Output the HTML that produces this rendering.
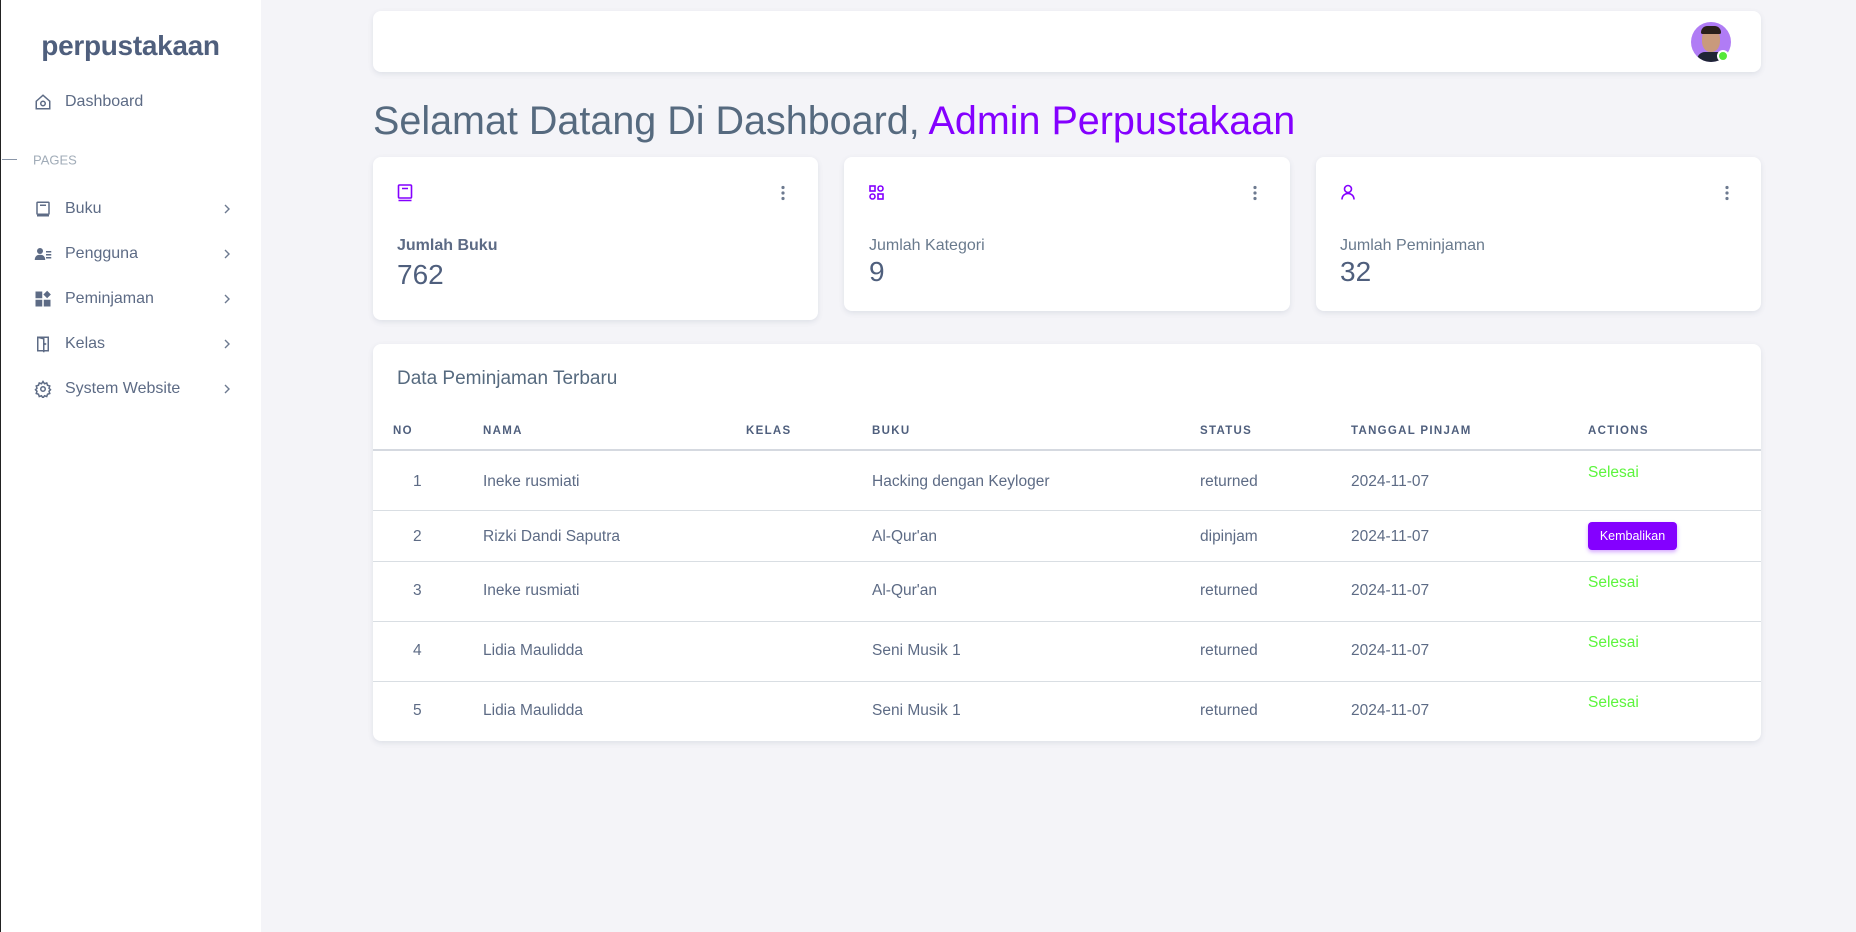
<!DOCTYPE html>
<html><head><meta charset="utf-8"><style>
*{box-sizing:border-box;margin:0;padding:0}
body{width:1856px;height:932px;background:#f4f4f8;font-family:"Liberation Sans",sans-serif;color:#566a7f;position:relative;overflow:hidden}
.abs{position:absolute}
.side{left:0;top:0;width:261px;height:932px;background:#fff;border-left:1.5px solid #222}
.logo{left:0;width:261px;top:30px;text-align:center;font-size:28px;font-weight:bold;color:#4f5f7d;letter-spacing:-0.3px}
.nav{left:65px;font-size:16px;color:#5d6b85;transform:translateY(-50%)}
.ic{left:34px;transform:translateY(-50%)}
.chev{left:222px;transform:translateY(-50%)}
.card{background:#fff;border-radius:8px;box-shadow:0 2px 6px rgba(67,89,113,.12)}
.lbl{font-size:16px;color:#697a8d}
.val{font-size:28px;color:#4f5f7d}
.th{top:425px;font-size:11.5px;font-weight:bold;letter-spacing:1.3px;color:#4f5f7d}
.td{font-size:15.5px;color:#5d6b85;transform:translateY(-50%)}
.line{left:373px;width:1388px;height:1px;background:#d9dee3}
.sel{left:1588px;font-size:15.5px;color:#5cf53d}
</style></head><body>
<div class="abs side"></div>
<div class="abs logo">perpustakaan</div>
<svg class="abs ic" style="top:102px" width="18" height="18" viewBox="0 0 24 24" fill="none" stroke="#5d6b85" stroke-width="2"><path d="M3 11l9-8 9 8v10H3z"/><circle cx="12" cy="14" r="3"/></svg>
<div class="abs nav" style="top:102px">Dashboard</div>
<div class="abs" style="left:2px;top:159px;width:15px;height:1px;background:#8a96a8"></div>
<div class="abs nav" style="left:33px;top:160px;font-size:13px;color:#a1acb8">PAGES</div>

<svg class="abs ic" style="top:209px" width="18" height="18" viewBox="0 0 24 24" fill="none" stroke="#5d6b85" stroke-width="2"><rect x="4" y="3" width="16" height="16" rx="1"/><path d="M4 21h16M8 7h8"/></svg>
<div class="abs nav" style="top:209px">Buku</div>
<svg class="abs ic" style="top:254px" width="18" height="18" viewBox="0 0 24 24" fill="#5d6b85"><circle cx="8" cy="8" r="4"/><path d="M1 20c0-5 3-7 7-7s7 2 7 7z"/><rect x="16" y="8" width="7" height="2"/><rect x="16" y="12" width="7" height="2"/><rect x="16" y="16" width="7" height="2"/></svg>
<div class="abs nav" style="top:254px">Pengguna</div>
<svg class="abs ic" style="top:299px" width="18" height="18" viewBox="0 0 24 24" fill="#5d6b85"><rect x="2" y="2" width="9" height="9"/><rect x="2" y="13" width="9" height="9"/><rect x="13" y="13" width="9" height="9"/><path d="M17.5 1l5 5-5 5-5-5z"/></svg>
<div class="abs nav" style="top:299px">Peminjaman</div>
<svg class="abs ic" style="top:344px" width="18" height="18" viewBox="0 0 24 24" fill="none" stroke="#5d6b85" stroke-width="2"><path d="M5 3h14v18H5zM5 3l8 2v18"/><circle cx="15" cy="12" r=".5"/></svg>
<div class="abs nav" style="top:344px">Kelas</div>
<svg class="abs ic" style="top:389px" width="18" height="18" viewBox="0 0 24 24" fill="none" stroke="#5d6b85" stroke-width="2"><circle cx="12" cy="12" r="3"/><path d="M12 2l2 3 3-1 1 3 3 1-1 3 2 2-2 2 1 3-3 1-1 3-3-1-2 3-2-3-3 1-1-3-3-1 1-3-2-2 2-2-1-3 3-1 1-3 3 1z"/></svg>
<div class="abs nav" style="top:389px">System Website</div>
<svg class="abs chev" style="top:209px" width="10" height="12" viewBox="0 0 10 12" fill="none" stroke="#6d7a90" stroke-width="1.4"><path d="M3 2l4 4-4 4"/></svg>
<svg class="abs chev" style="top:254px" width="10" height="12" viewBox="0 0 10 12" fill="none" stroke="#6d7a90" stroke-width="1.4"><path d="M3 2l4 4-4 4"/></svg>
<svg class="abs chev" style="top:299px" width="10" height="12" viewBox="0 0 10 12" fill="none" stroke="#6d7a90" stroke-width="1.4"><path d="M3 2l4 4-4 4"/></svg>
<svg class="abs chev" style="top:344px" width="10" height="12" viewBox="0 0 10 12" fill="none" stroke="#6d7a90" stroke-width="1.4"><path d="M3 2l4 4-4 4"/></svg>
<svg class="abs chev" style="top:389px" width="10" height="12" viewBox="0 0 10 12" fill="none" stroke="#6d7a90" stroke-width="1.4"><path d="M3 2l4 4-4 4"/></svg>

<div class="abs card" style="left:373px;top:11px;width:1388px;height:61px"></div>
<div class="abs" style="left:1691px;top:22px;width:40px;height:40px;border-radius:50%;background:#b07cf5;overflow:hidden">
<div class="abs" style="left:11px;top:6px;width:18px;height:24px;border-radius:45%;background:#c99a7c"></div>
<div class="abs" style="left:10px;top:4px;width:20px;height:8px;border-radius:8px 8px 2px 2px;background:#2a1f1a"></div>
<div class="abs" style="left:6px;top:30px;width:28px;height:14px;border-radius:8px 8px 0 0;background:#1f2535"></div></div>
<div class="abs" style="left:1717px;top:50px;width:12px;height:12px;border-radius:50%;background:#56e83a;border:2px solid #fff"></div>

<div class="abs" style="left:373px;top:99px;font-size:39.5px;color:#566a7f;white-space:nowrap">Selamat Datang Di Dashboard, <span style="color:#8400ff">Admin Perpustakaan</span></div>

<div class="abs card" style="left:373px;top:157px;width:445px;height:163px"></div>
<div class="abs card" style="left:844px;top:157px;width:446px;height:154px"></div>
<div class="abs card" style="left:1316px;top:157px;width:445px;height:154px"></div>
<svg class="abs" style="left:397px;top:184px" width="16" height="18" viewBox="0 0 16 18" fill="none" stroke="#8400ff" stroke-width="1.6"><rect x="1.5" y="1" width="13" height="13" rx="1"/><path d="M1.5 16.5h13M5 4.5h6"/></svg>
<svg class="abs" style="left:869px;top:185px" width="15" height="15" viewBox="0 0 15 15" fill="none" stroke="#8400ff" stroke-width="1.6"><rect x="1" y="1" width="5" height="5"/><circle cx="11.5" cy="3.5" r="2.5"/><circle cx="3.5" cy="11.5" r="2.5"/><rect x="9" y="9" width="5" height="5"/></svg>
<svg class="abs" style="left:1340px;top:184px" width="16" height="16" viewBox="0 0 16 16" fill="none" stroke="#8400ff" stroke-width="1.6"><circle cx="8" cy="5" r="3.5"/><path d="M2 15.5c0-4 3-6 6-6s6 2 6 6"/></svg>
<svg class="abs" style="left:781px;top:185px" width="4" height="16"><circle cx="2" cy="2.5" r="1.6" fill="#6d7a90"/><circle cx="2" cy="8" r="1.6" fill="#6d7a90"/><circle cx="2" cy="13.5" r="1.6" fill="#6d7a90"/></svg>
<svg class="abs" style="left:1253px;top:185px" width="4" height="16"><circle cx="2" cy="2.5" r="1.6" fill="#6d7a90"/><circle cx="2" cy="8" r="1.6" fill="#6d7a90"/><circle cx="2" cy="13.5" r="1.6" fill="#6d7a90"/></svg>
<svg class="abs" style="left:1725px;top:185px" width="4" height="16"><circle cx="2" cy="2.5" r="1.6" fill="#6d7a90"/><circle cx="2" cy="8" r="1.6" fill="#6d7a90"/><circle cx="2" cy="13.5" r="1.6" fill="#6d7a90"/></svg>
<div class="abs lbl" style="left:397px;top:237px;font-weight:bold;color:#5d6b85">Jumlah Buku</div>
<div class="abs val" style="left:397px;top:259px">762</div>
<div class="abs lbl" style="left:869px;top:237px">Jumlah Kategori</div>
<div class="abs val" style="left:869px;top:256px">9</div>
<div class="abs lbl" style="left:1340px;top:237px">Jumlah Peminjaman</div>
<div class="abs val" style="left:1340px;top:256px">32</div>

<div class="abs card" style="left:373px;top:344px;width:1388px;height:397px"></div>
<div class="abs" style="left:397px;top:368px;font-size:19px;color:#566a7f">Data Peminjaman Terbaru</div>
<div class="abs th" style="left:393px">NO</div>
<div class="abs th" style="left:483px">NAMA</div>
<div class="abs th" style="left:746px">KELAS</div>
<div class="abs th" style="left:872px">BUKU</div>
<div class="abs th" style="left:1200px">STATUS</div>
<div class="abs th" style="left:1351px">TANGGAL PINJAM</div>
<div class="abs th" style="left:1588px">ACTIONS</div>
<div class="abs line" style="top:449px;height:2px;background:#d5d9e0"></div>
<div class="abs line" style="top:510px"></div>
<div class="abs line" style="top:561px"></div>
<div class="abs line" style="top:621px"></div>
<div class="abs line" style="top:681px"></div>

<div class="abs td" style="left:413px;top:482px">1</div><div class="abs td" style="left:483px;top:482px">Ineke rusmiati</div><div class="abs td" style="left:872px;top:482px">Hacking dengan Keyloger</div><div class="abs td" style="left:1200px;top:482px">returned</div><div class="abs td" style="left:1351px;top:482px">2024-11-07</div><div class="abs sel" style="top:464px">Selesai</div>
<div class="abs td" style="left:413px;top:537px">2</div><div class="abs td" style="left:483px;top:537px">Rizki Dandi Saputra</div><div class="abs td" style="left:872px;top:537px">Al-Qur'an</div><div class="abs td" style="left:1200px;top:537px">dipinjam</div><div class="abs td" style="left:1351px;top:537px">2024-11-07</div>
<div class="abs" style="left:1588px;top:522px;width:89px;height:28px;background:#8400ff;border-radius:4px;color:#fff;font-size:12.5px;line-height:28px;text-align:center;box-shadow:0 2px 4px rgba(132,0,255,.35)">Kembalikan</div>
<div class="abs td" style="left:413px;top:591px">3</div><div class="abs td" style="left:483px;top:591px">Ineke rusmiati</div><div class="abs td" style="left:872px;top:591px">Al-Qur'an</div><div class="abs td" style="left:1200px;top:591px">returned</div><div class="abs td" style="left:1351px;top:591px">2024-11-07</div><div class="abs sel" style="top:574px">Selesai</div>
<div class="abs td" style="left:413px;top:651px">4</div><div class="abs td" style="left:483px;top:651px">Lidia Maulidda</div><div class="abs td" style="left:872px;top:651px">Seni Musik 1</div><div class="abs td" style="left:1200px;top:651px">returned</div><div class="abs td" style="left:1351px;top:651px">2024-11-07</div><div class="abs sel" style="top:634px">Selesai</div>
<div class="abs td" style="left:413px;top:711px">5</div><div class="abs td" style="left:483px;top:711px">Lidia Maulidda</div><div class="abs td" style="left:872px;top:711px">Seni Musik 1</div><div class="abs td" style="left:1200px;top:711px">returned</div><div class="abs td" style="left:1351px;top:711px">2024-11-07</div><div class="abs sel" style="top:694px">Selesai</div>
</body></html>
